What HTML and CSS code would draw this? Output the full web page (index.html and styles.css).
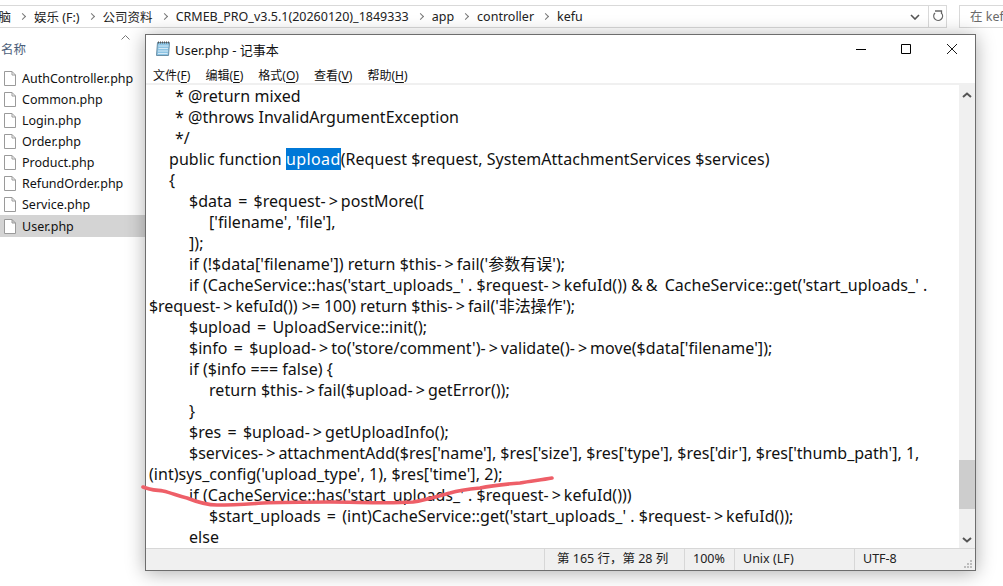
FILE: index.html
```html
<!DOCTYPE html>
<html lang="zh">
<head>
<meta charset="utf-8">
<title>User.php - 记事本</title>
<link rel="stylesheet" href="styles.css">
</head>
<body>
<div class="explorer">
  <div class="toolbar">
    <div class="address">
      <div class="crumbs">
        <span class="clip">电脑</span><i class="chev"></i>
        <span>娱乐 (F:)</span><i class="chev"></i>
        <span>公司资料</span><i class="chev"></i>
        <span>CRMEB_PRO_v3.5.1(20260120)_1849333</span><i class="chev"></i>
        <span>app</span><i class="chev"></i>
        <span>controller</span><i class="chev"></i>
        <span>kefu</span>
      </div>
      <svg class="drop" width="10" height="6" viewBox="0 0 10 6"><path d="M1 1l4 4 4-4" fill="none" stroke="#555" stroke-width="1.6"/></svg>
      <div class="refresh"><svg width="12" height="13" viewBox="0 0 12 13"><path d="M9.500 3.200A4.400 4.400 0 1 1 3 3M3 1h6.500v3" fill="none" stroke="#666" stroke-width="1.3"/></svg></div>
    </div>
    <div class="search">在 kefu</div>
  </div>
  <div class="list">
    <div class="list-head"><span>名称</span><svg class="sort" width="9" height="5" viewBox="0 0 9 5"><path d="M.5 4.500l4-4 4 4" fill="none" stroke="#777"/></svg></div>
    <div class="file"><svg class="ficon" width="12" height="15" viewBox="0 0 12 15"><path d="M.5.5h7.500l3.500 3.500v10.500h-11zM8 .5v3.500h3.500" fill="#fff" stroke="#9a9a9a"/></svg><span>AuthController.php</span></div>
    <div class="file"><svg class="ficon" width="12" height="15" viewBox="0 0 12 15"><path d="M.5.5h7.500l3.500 3.500v10.500h-11zM8 .5v3.500h3.500" fill="#fff" stroke="#9a9a9a"/></svg><span>Common.php</span></div>
    <div class="file"><svg class="ficon" width="12" height="15" viewBox="0 0 12 15"><path d="M.5.5h7.500l3.500 3.500v10.500h-11zM8 .5v3.500h3.500" fill="#fff" stroke="#9a9a9a"/></svg><span>Login.php</span></div>
    <div class="file"><svg class="ficon" width="12" height="15" viewBox="0 0 12 15"><path d="M.5.5h7.500l3.500 3.500v10.500h-11zM8 .5v3.500h3.500" fill="#fff" stroke="#9a9a9a"/></svg><span>Order.php</span></div>
    <div class="file"><svg class="ficon" width="12" height="15" viewBox="0 0 12 15"><path d="M.5.5h7.500l3.500 3.500v10.500h-11zM8 .5v3.500h3.500" fill="#fff" stroke="#9a9a9a"/></svg><span>Product.php</span></div>
    <div class="file"><svg class="ficon" width="12" height="15" viewBox="0 0 12 15"><path d="M.5.5h7.500l3.500 3.500v10.500h-11zM8 .5v3.500h3.500" fill="#fff" stroke="#9a9a9a"/></svg><span>RefundOrder.php</span></div>
    <div class="file"><svg class="ficon" width="12" height="15" viewBox="0 0 12 15"><path d="M.5.5h7.500l3.500 3.500v10.500h-11zM8 .5v3.500h3.500" fill="#fff" stroke="#9a9a9a"/></svg><span>Service.php</span></div>
    <div class="file selected"><svg class="ficon" width="12" height="15" viewBox="0 0 12 15"><path d="M.5.5h7.500l3.500 3.500v10.500h-11zM8 .5v3.500h3.500" fill="#fff" stroke="#9a9a9a"/></svg><span>User.php</span></div>
  </div>
</div>

<div class="window">
  <div class="titlebar">
    <svg class="appicon" width="16" height="16" viewBox="0 0 16 16"><path d="M2.500 1.500h12l-1 13h-12z" fill="#8cc4e4" stroke="#6b8fa6"/><path d="M3.500 5h10M3.500 7.500h9.500M3 10h10M3 12.500h9.500" stroke="#d5e9f5"/><path d="M3 1.500h11.500" stroke="#555" stroke-width="2" stroke-dasharray="1 1"/></svg>
    <span class="title">User.php - 记事本</span>
    <div class="controls">
      <svg width="10" height="10" viewBox="0 0 10 10"><path d="M0 5.500h10" stroke="#000"/></svg>
      <svg class="ctl-max" width="10" height="10" viewBox="0 0 10 10"><path d="M.5.500h9v9h-9z" fill="none" stroke="#000"/></svg>
      <svg width="10" height="10" viewBox="0 0 10 10"><path d="M0 0l10 10M10 0L0 10" stroke="#000" stroke-width=".9"/></svg>
    </div>
  </div>
  <div class="menubar">
    <span>文件(<u>F</u>)</span><span>编辑(<u>E</u>)</span><span>格式(<u>O</u>)</span><span>查看(<u>V</u>)</span><span>帮助(<u>H</u>)</span>
  </div>
  <div class="body">
    <div class="code">
      <div class="ln star">* @return mixed</div>
      <div class="ln star">* @throws InvalidArgumentException</div>
      <div class="ln star">*/</div>
      <div class="ln i1">public function <mark>upload</mark>(Request $request, SystemAttachmentServices $services)</div>
      <div class="ln i1">{</div>
      <div class="ln i2">$data <span class="eq">=</span> $request<span class="ar">-&gt;</span>postMore([</div>
      <div class="ln i3">['filename', 'file'],</div>
      <div class="ln i2">]);</div>
      <div class="ln i2">if (!$data['filename']) return $this<span class="ar">-&gt;</span>fail('参数有误');</div>
      <div class="ln i2">if (CacheService::has('start_uploads_' . $request<span class="ar">-&gt;</span>kefuId()) <span class="amp">&amp;&amp;</span> CacheService::get('start_uploads_' .</div>
      <div class="ln tight">$request<span class="ar">-&gt;</span>kefuId()) &gt;= 100) return $this<span class="ar">-&gt;</span>fail('非法操作');</div>
      <div class="ln i2">$upload <span class="eq">=</span> UploadService::init();</div>
      <div class="ln i2">$info <span class="eq">=</span> $upload<span class="ar">-&gt;</span>to('store/comment')<span class="ar">-&gt;</span>validate()<span class="ar">-&gt;</span>move($data['filename']);</div>
      <div class="ln i2">if ($info === false) {</div>
      <div class="ln i3">return $this<span class="ar">-&gt;</span>fail($upload<span class="ar">-&gt;</span>getError());</div>
      <div class="ln i2">}</div>
      <div class="ln i2">$res <span class="eq">=</span> $upload<span class="ar">-&gt;</span>getUploadInfo();</div>
      <div class="ln i2 flat">$services<span class="ar">-&gt;</span>attachmentAdd($res['name'], $res['size'], $res['type'], $res['dir'], $res['thumb_path'], 1,</div>
      <div class="ln">(int)sys_config('upload_type', 1), $res['time'], 2);</div>
      <div class="ln i2">if (CacheService::has('start_uploads_' . $request<span class="ar">-&gt;</span>kefuId()))</div>
      <div class="ln i3">$start_uploads <span class="eq">=</span> (int)CacheService::get('start_uploads_' . $request<span class="ar">-&gt;</span>kefuId());</div>
      <div class="ln i2">else</div>
    </div>
    <div class="scrollbar">
      <svg width="10" height="6" viewBox="0 0 10 6"><path d="M1 5l4-3.500L9 5" fill="none" stroke="#555" stroke-width="2"/></svg>
      <div class="track"><div class="thumb"></div></div>
      <svg width="10" height="6" viewBox="0 0 10 6"><path d="M1 1l4 3.500L9 1" fill="none" stroke="#555" stroke-width="2"/></svg>
    </div>
  </div>
  <div class="status">
    <div class="cell c0"></div>
    <div class="cell c1">第 165 行，第 28 列</div>
    <div class="cell c2">100%</div>
    <div class="cell c3">Unix (LF)</div>
    <div class="cell c4">UTF-8</div>
    <svg class="grip" width="10" height="10" viewBox="0 0 10 10"><path d="M7 1h2v2H7zM4 4h2v2H4zM7 4h2v2H7zM1 7h2v2H1zM4 7h2v2H4zM7 7h2v2H7z" fill="#bdbdbd"/></svg>
  </div>
</div>

<svg class="scribble" width="1003" height="586" viewBox="0 0 1003 586"><path d="M143 487C150 490 156 490 163 491C172 493 178 496 187 498C197 502 206 505 217 505C232 505 248 504 263 503C285 502 308 502 330 502C358 502 387 504 413 502C427 500 438 496 450 493C460 490 470 489 480 488C494 485 507 484 520 483C531 481 541 480 552 478" fill="none" stroke="#ee5f68" stroke-width="3.600" stroke-linecap="round"/></svg>
</body>
</html>
```
FILE: styles.css
```css
* { box-sizing: border-box; }
html, body { margin: 0; height: 100%; overflow: hidden; background: #fff; }
body {
  width: 1003px;
  height: 586px;
  position: relative;
  font-family: "Noto Sans", "Noto Sans CJK SC", sans-serif;
  color: #111;
}
.explorer { height: 586px; }
.toolbar { display: flex; height: 34px; padding-top: 5px; padding-bottom: 6px; gap: 12px; overflow: hidden; }
.address {
  width: 947px; flex: none; height: 23px;
  border: 1px solid #d9d9d9; border-left: 0;
  display: flex; align-items: center;
  font-size: 12.500px; color: #222;
}
.crumbs { flex: 1; display: flex; align-items: center; gap: 9px; white-space: nowrap; overflow: hidden; }
.clip { margin-left: -14px; }
.chev { width: 5px; height: 5px; flex: none; border-top: 1.500px solid #777; border-right: 1.500px solid #777; transform: rotate(45deg); }
.drop { margin-right: 8px; }
.refresh { width: 18px; height: 21px; border-left: 1px solid #d9d9d9; display: flex; align-items: center; justify-content: center; }
.search { flex: 1; height: 23px; border: 1px solid #d9d9d9; border-right: 0; font-size: 12.500px; color: #6a6a6a; padding-left: 10px; line-height: 21px; white-space: nowrap; }
.list { width: 145px; }
.list-head { height: 33px; position: relative; display: flex; align-items: center; font-size: 12.500px; color: #4c607a; padding-left: 1px; margin-bottom: 1px; padding-bottom: 5px; }
.sort { position: absolute; left: 121px; top: 1px; }
.file { height: 21px; display: flex; align-items: center; gap: 6px; padding-left: 4px; font-size: 12.500px; white-space: nowrap; }
.ficon { flex: none; }
.selected { background: #d4d4d4; height: 22px; }

.window {
  position: absolute; left: 145px; top: 34px; width: 831px; height: 537px;
  background: #fff; border: 1px solid #6d6d6d;
  box-shadow: 0 2px 18px rgba(0,0,0,.32);
  display: flex; flex-direction: column;
}
.titlebar { height: 26px; flex: none; display: flex; align-items: center; padding-left: 9px; padding-top: 2px; }
.appicon { flex: none; margin-right: 4px; }
.title { font-size: 13px; color: #111; flex: 1; }
.controls { display: flex; gap: 35px; padding-right: 18px; }
.ctl-max { margin-right: 1px; }
.menubar { height: 22px; flex: none; display: flex; gap: 15px; padding-left: 7px; align-items: center; font-size: 12px; color: #111; padding-top: 6px; }
.menubar u { text-underline-offset: 2px; }
.body { flex: 1; min-height: 0; display: flex; border-top: 2px solid #f0f0f0; }
.code { flex: 1; min-width: 0; overflow: hidden; padding: 1px 0 0 3px; font-size: 16px; line-height: 21px; color: #111; letter-spacing: .04px; }
.ln { white-space: nowrap; height: 21px; }
.star { padding-left: 26px; }
.i1 { padding-left: 20px; }
.i2 { padding-left: 40px; }
.i3 { padding-left: 60px; }
.tight { letter-spacing: -.06px; }
.flat { letter-spacing: 0; }
.ar { letter-spacing: 3px; }
.eq { padding: 0 2px; }
.amp { letter-spacing: 3px; }
mark { background: #0078d7; color: #fff; letter-spacing: .4px; }
.scrollbar { width: 16px; flex: none; background: #f0f0f0; display: flex; flex-direction: column; align-items: center; padding: 7px 0 5px; }
.track { flex: 1; width: 100%; position: relative; }
.thumb { position: absolute; left: 0; right: 0; top: 362px; height: 49px; background: #cdcdcd; }
.status { height: 22px; flex: none; background: #f0f0f0; border-top: 1px solid #d7d7d7; display: flex; align-items: center; font-size: 12.500px; color: #222; position: relative; }
.cell { height: 100%; border-left: 1px solid #d7d7d7; padding-left: 12px; line-height: 20px; white-space: nowrap; flex: none; }
.c0 { width: 398px; border-left: 0; }
.c1 { width: 140px; }
.c2 { width: 50px; padding-left: 8px; }
.c3 { width: 120px; padding-left: 8px; }
.c4 { width: 121px; padding-left: 8px; }
.grip { position: absolute; right: 2px; bottom: 1px; }
.scribble { position: absolute; left: 0; top: 0; pointer-events: none; }
```
